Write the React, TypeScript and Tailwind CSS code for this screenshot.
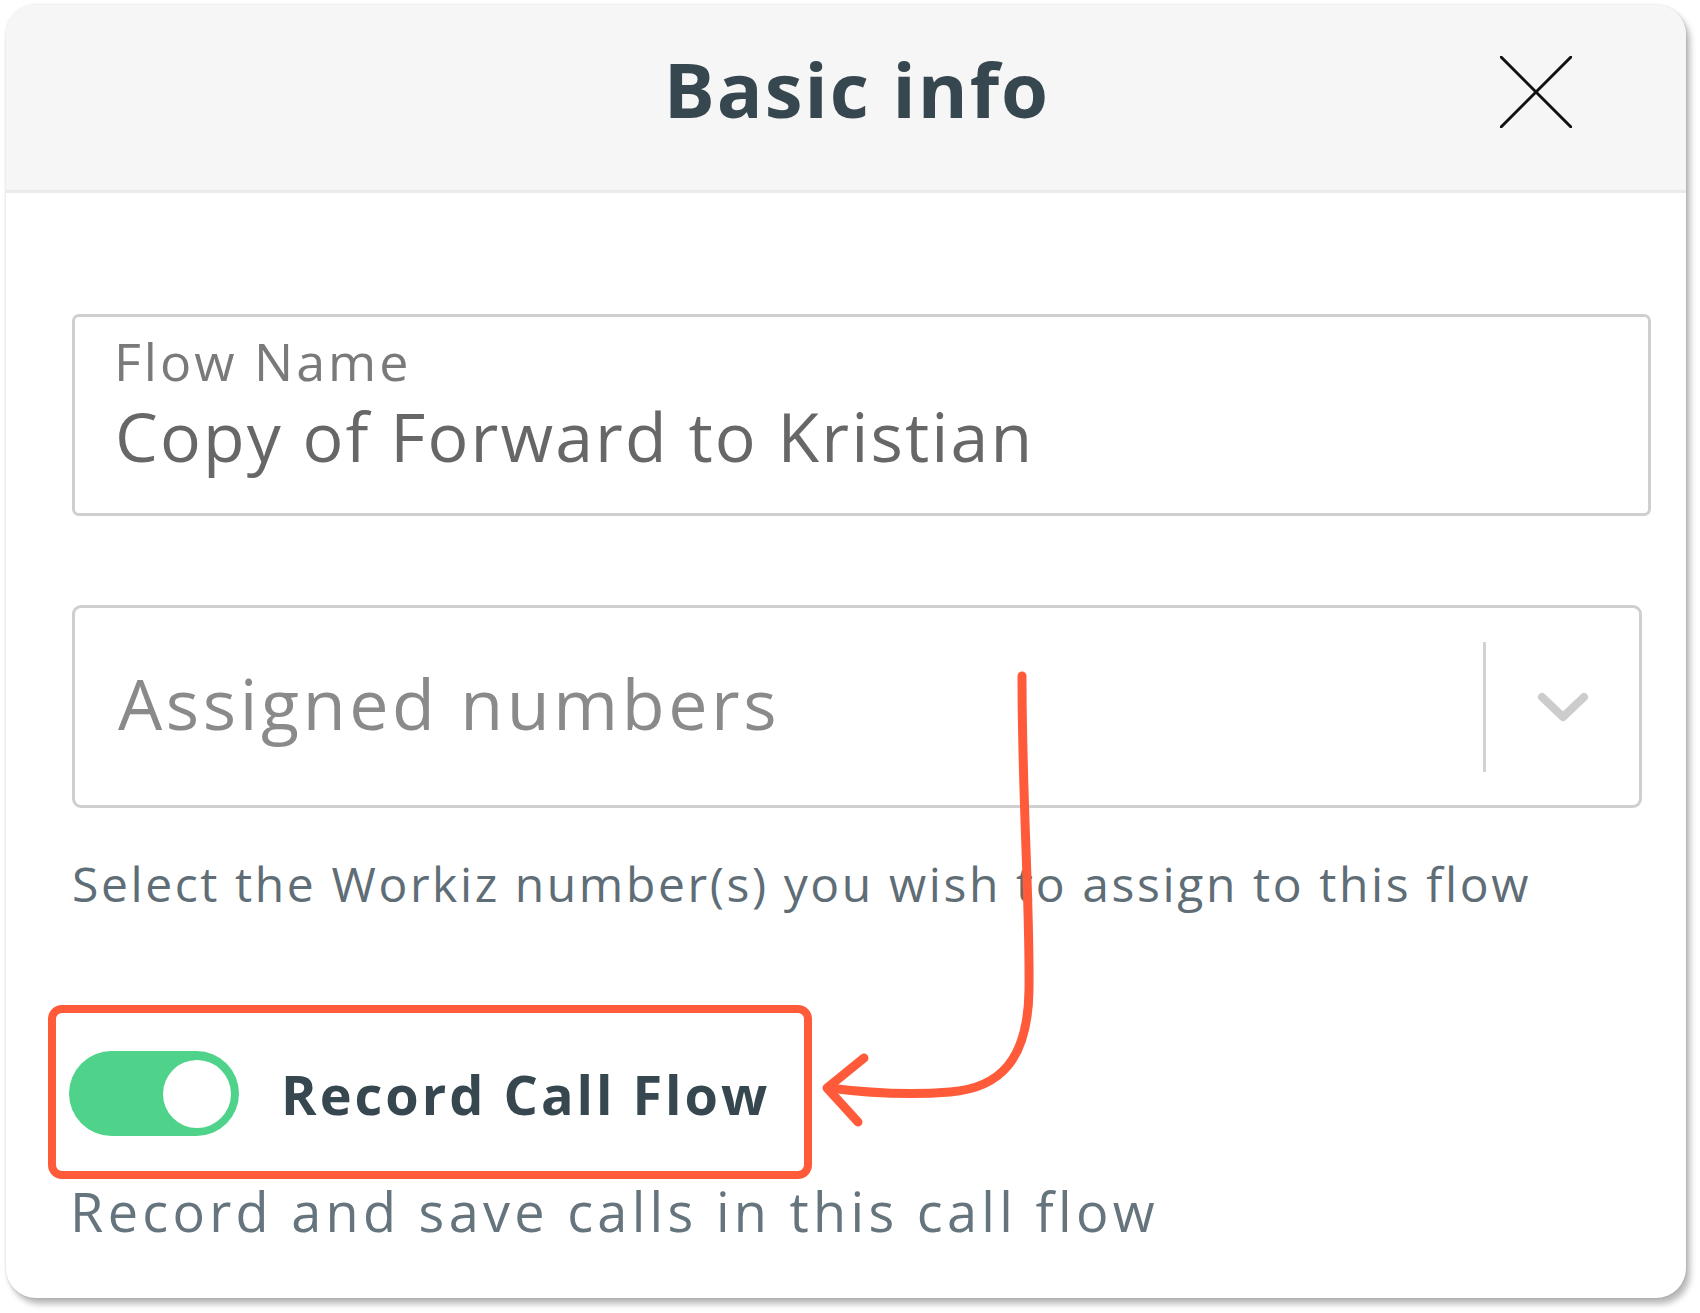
import React from "react";

export default function App() {
  return (
    <div className="relative w-[1700px] h-[1313px] bg-white pt-[5px] pl-[6px] font-['Open_Sans',sans-serif]">
      <div className="w-[1680px] h-[1293px] rounded-[30px] bg-white overflow-hidden flex flex-col shadow-[0_0_3px_rgba(0,0,0,0.15),4px_6px_6px_rgba(0,0,0,0.28)]">
        {/* Header */}
        <div className="relative h-[188px] shrink-0 bg-[#f6f6f6] border-b-[3px] border-[#ebebeb] flex justify-center items-start pt-[46px] pl-[22px]">
          <h1 className="text-[76px] leading-none font-bold tracking-[2px] text-[#37474f]">Basic info</h1>
          <button className="absolute right-[114px] top-[51px] w-[72px] h-[72px]" aria-label="Close">
            <svg width="72" height="72" viewBox="0 0 72 72">
              <line x1="1" y1="1" x2="71" y2="71" stroke="#111" strokeWidth="3" strokeLinecap="round" />
              <line x1="71" y1="1" x2="1" y2="71" stroke="#111" strokeWidth="3" strokeLinecap="round" />
            </svg>
          </button>
        </div>

        {/* Body */}
        <div className="flex flex-col pl-[66px] pt-[121px]">
          {/* Flow name field */}
          <div className="w-[1579px] h-[202px] border-[3px] border-[#cfcfcf] rounded-[7px] pl-[39px] pt-[18px] flex flex-col">
            <span className="text-[52px] leading-none tracking-[3px] text-[#7a7a7a]">Flow Name</span>
            <span className="mt-[15px] ml-[1px] text-[68px] leading-none tracking-[2.1px] text-[#676767]">Copy of Forward to Kristian</span>
          </div>

          {/* Assigned numbers select */}
          <div className="mt-[89px] w-[1570px] h-[203px] border-[3px] border-[#cfcfcf] rounded-[9px] flex items-center">
            <div className="flex-1 pl-[43px] mb-[7px]">
              <span className="text-[70px] leading-none tracking-[3.6px] text-[#8a8a8a]">Assigned numbers</span>
            </div>
            <div className="w-[3px] h-[130px] bg-[#d2d2d2]" />
            <div className="w-[153px] h-full flex items-center justify-center">
              <svg width="52" height="30" viewBox="0 0 52 30">
                <polyline points="5,5 26,25 47,5" fill="none" stroke="#cccccc" strokeWidth="8" strokeLinecap="round" strokeLinejoin="round" />
              </svg>
            </div>
          </div>

          <p className="mt-[52px] text-[48px] leading-none tracking-[2.6px] text-[#5f6d76]">
            Select the Workiz number(s) you wish to assign to this flow
          </p>

          {/* Record Call Flow row, highlighted */}
          <div className="mt-[97px] -ml-[24px] w-[764px] h-[174px] border-[8px] border-[#ff5b3a] rounded-[14px] flex items-center pl-[13px] pt-[3px]">
            <div className="w-[170px] h-[85px] rounded-full bg-[#4fd38b] flex items-center justify-end pr-[8px]">
              <div className="w-[68px] h-[68px] rounded-full bg-white" />
            </div>
            <span className="ml-[42px] text-[54px] leading-none font-bold tracking-[3px] text-[#37474f]">Record Call Flow</span>
          </div>

          <p className="mt-[5px] -ml-[2px] text-[54px] leading-none tracking-[4.3px] text-[#65747d]">
            Record and save calls in this call flow
          </p>
        </div>
      </div>

      {/* Annotation arrow */}
      <svg className="absolute left-0 top-0 pointer-events-none" width="1700" height="1313" viewBox="0 0 1700 1313">
        <path
          d="M1022 676 C1022 800 1030 900 1029 990 C1028 1060 1000 1088 950 1092 C900 1096 860 1092 829 1088"
          fill="none"
          stroke="#ff5b3a"
          strokeWidth="9"
          strokeLinecap="round"
          strokeLinejoin="round"
        />
        <path
          d="M864 1058 L827 1088 L858 1122"
          fill="none"
          stroke="#ff5b3a"
          strokeWidth="9"
          strokeLinecap="round"
          strokeLinejoin="round"
        />
      </svg>
    </div>
  );
}
